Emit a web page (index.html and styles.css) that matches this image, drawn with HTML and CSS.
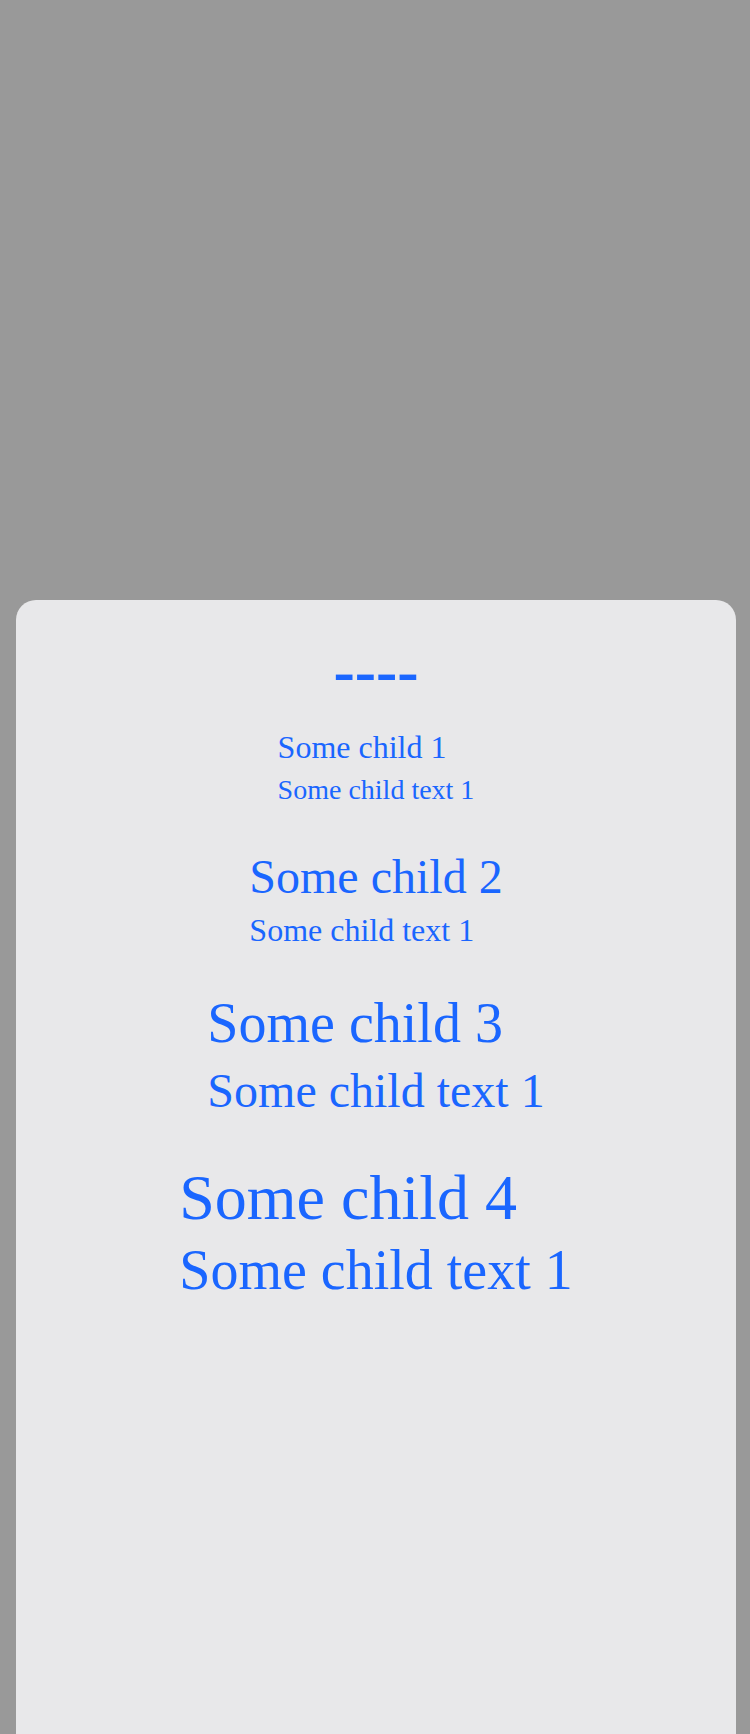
FILE: index.html
```html
<!DOCTYPE html>
<html>
<head>
<meta charset="utf-8">
<link rel="stylesheet" href="styles.css">
</head>
<body>
<div class="page">
  <div class="sheet">
    <div class="dashes">----</div>
    <div class="list">
      <div class="child c1">
        <div class="title">Some child 1</div>
        <div class="text">Some child text 1</div>
      </div>
      <div class="child c2">
        <div class="title">Some child 2</div>
        <div class="text">Some child text 1</div>
      </div>
      <div class="child c3">
        <div class="title">Some child 3</div>
        <div class="text">Some child text 1</div>
      </div>
      <div class="child c4">
        <div class="title">Some child 4</div>
        <div class="text">Some child text 1</div>
      </div>
    </div>
  </div>
</div>
</body>
</html>
```
FILE: styles.css
```css
html, body {
  margin: 0;
  padding: 0;
  background: #999999;
}
.page {
  height: 1734px;
  overflow: hidden;
  padding-top: 600px;
  padding-left: 16px;
  box-sizing: border-box;
}
.sheet {
  width: 720px;
  height: 1200px;
  background: #e8e8ea;
  border-radius: 20px 20px 0 0;
  padding-top: 34px;
  box-sizing: border-box;
  display: flex;
  flex-direction: column;
  align-items: center;
  font-family: "Liberation Serif", "Times New Roman", serif;
  color: #1a66ff;
}
.dashes {
  font-size: 64px;
  font-weight: bold;
  line-height: normal;
  margin-bottom: 21px;
}
.list {
  display: flex;
  flex-direction: column;
  align-items: center;
  gap: 42.5px;
}
.child {
  display: flex;
  flex-direction: column;
  align-items: flex-start;
  gap: 8px;
}
.c1 .title { font-size: 32px; }
.c1 .text { font-size: 28px; }
.c2 .title { font-size: 48px; }
.c2 .text { font-size: 32px; }
.c3 .title { font-size: 56px; }
.c3 .text { font-size: 48px; }
.c4 { gap: 3px; }
.c4 .title { font-size: 64px; }
.c4 .text { font-size: 56px; }
```
